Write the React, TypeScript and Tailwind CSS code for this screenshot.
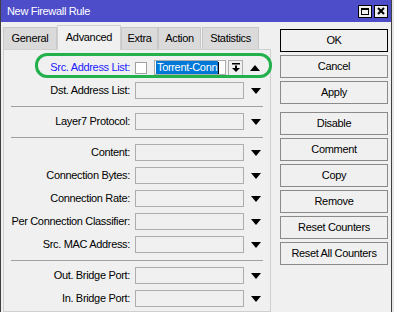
import React from "react";

const Arrow = ({ up = false }: { up?: boolean }) => (
  <svg width="10" height="6" viewBox="0 0 10 6">
    {up ? <polygon points="0,6 10,6 5,0" fill="#000" /> : <polygon points="0,0 10,0 5,6" fill="#000" />}
  </svg>
);

const Row = ({ label, blue = false, children }: { label: string; blue?: boolean; children?: React.ReactNode }) => (
  <div className="flex items-center h-[23px]">
    <div className={`w-[127px] text-right pr-[1px] whitespace-nowrap ${blue ? "text-[#2020ff]" : "text-black"}`}>{label}</div>
    <div className="w-[4px]" />
    {children}
  </div>
);

const Field = () => (
  <>
    <div className="w-[109px] h-[17px] border border-[#adadad] bg-[#f0f0f0]" />
    <div className="w-[24px] flex justify-center">
      <Arrow />
    </div>
  </>
);

const Sep = () => (
  <div className="h-[8px] flex flex-col">
    <div className="h-[4px]" />
    <div className="mx-[7px] h-px bg-[#a0a0a0]" />
  </div>
);

const Btn = ({ label, def = false, extra = false }: { label: string; def?: boolean; extra?: boolean }) => (
  <div
    className={`w-[108px] h-[23px] flex items-center justify-center bg-[#f0f0f0] border ${
      def ? "border-black" : "border-[#8a8a8a]"
    } ${extra ? "mt-[5px]" : ""}`}
  >
    {label}
  </div>
);

export default function App() {
  return (
    <div className="w-[394px] h-[312px] overflow-hidden bg-[#e6e6e6] font-['Liberation_Sans',Arial,sans-serif] text-[11px] tracking-[-0.33px] text-black leading-none">
      <div className="w-[392px] h-[312px] flex flex-col border-l border-r border-[#404040] bg-[#f0f0f0]">
        {/* Title bar */}
        <div className="h-[22px] bg-[#4d4dc9] flex items-center pl-[6px] pr-[3px] text-white">
          <span className="flex-1 pt-[1px]">New Firewall Rule</span>
          <div className="flex gap-[2px]">
            <div className="w-[14px] h-[13px] bg-[#f0f0f0] border border-black flex items-center justify-center">
              <div className="w-[8px] h-[7px] border border-black border-t-2" />
            </div>
            <div className="w-[14px] h-[13px] bg-[#f0f0f0] border border-black flex items-center justify-center">
              <svg width="8" height="8" viewBox="0 0 8 8">
                <path d="M1 1 L7 7 M7 1 L1 7" stroke="#000" strokeWidth="2" />
              </svg>
            </div>
          </div>
        </div>

        <div className="flex flex-1">
          {/* Left */}
          <div className="ml-[2px] w-[268px] flex flex-col">
            <div className="h-[27px] flex items-end">
              <div className="w-[54px] h-[22px] bg-[#dadada] border border-[#c8c8c8] border-b-0 flex items-center justify-center">General</div>
              <div className="relative z-10 -mb-px w-[64px] h-[25px] bg-[#f0f0f0] border border-[#d0d0d0] border-b-0 flex items-center justify-center pb-[2px]">Advanced</div>
              <div className="w-[37px] h-[22px] bg-[#dadada] border border-[#c8c8c8] border-b-0 flex items-center justify-center">Extra</div>
              <div className="w-[43px] h-[22px] bg-[#dadada] border border-[#c8c8c8] border-b-0 flex items-center justify-center">Action</div>
              <div className="ml-[1px] w-[57px] h-[22px] bg-[#dadada] border border-[#c8c8c8] border-b-0 flex items-center justify-center">Statistics</div>
            </div>
            <div className="relative flex-1 border border-[#d0d0d0] pt-[6px]">
              <Row label="Src. Address List:" blue>
                <div className="w-[12px] h-[12px] bg-white border border-[#a0a0a0]" />
                <div className="w-[7px]" />
                <div className="w-[72px] h-[15px] bg-white border border-[#adadad] flex items-center pl-[1px]">
                  <span className="bg-[#0078d7] text-white h-[13px] flex items-center px-[1px]">Torrent-Conn</span>
                  <div className="w-px h-[12px] bg-black" />
                </div>
                <div className="w-[2px]" />
                <div className="w-[15px] h-[16px] bg-[#f0f0f0] border border-[#adadad] flex items-center justify-center">
                  <svg width="8" height="9" viewBox="0 0 8 9">
                    <rect x="0" y="0" width="8" height="1.5" fill="#000" />
                    <rect x="3" y="2.5" width="2" height="3" fill="#000" />
                    <polygon points="0,5 8,5 4,9" fill="#000" />
                  </svg>
                </div>
                <div className="w-[24px] flex justify-center">
                  <Arrow up />
                </div>
              </Row>
              <Row label="Dst. Address List:">
                <Field />
              </Row>
              <Sep />
              <Row label="Layer7 Protocol:">
                <Field />
              </Row>
              <Sep />
              <Row label="Content:">
                <Field />
              </Row>
              <Row label="Connection Bytes:">
                <Field />
              </Row>
              <Row label="Connection Rate:">
                <Field />
              </Row>
              <Row label="Per Connection Classifier:">
                <Field />
              </Row>
              <Row label="Src. MAC Address:">
                <Field />
              </Row>
              <Sep />
              <Row label="Out. Bridge Port:">
                <Field />
              </Row>
              <Row label="In. Bridge Port:">
                <Field />
              </Row>
              <div className="absolute left-[31px] top-[3px] w-[237px] h-[25px] border-[3px] border-[#22b14c] rounded-[12px]" />
            </div>
          </div>

          {/* Right buttons */}
          <div className="ml-[9px] pt-[7px] flex flex-col gap-[3px]">
            <Btn label="OK" def />
            <Btn label="Cancel" />
            <Btn label="Apply" />
            <Btn label="Disable" extra />
            <Btn label="Comment" />
            <Btn label="Copy" />
            <Btn label="Remove" />
            <Btn label="Reset Counters" />
            <Btn label="Reset All Counters" />
          </div>
        </div>
      </div>
    </div>
  );
}
